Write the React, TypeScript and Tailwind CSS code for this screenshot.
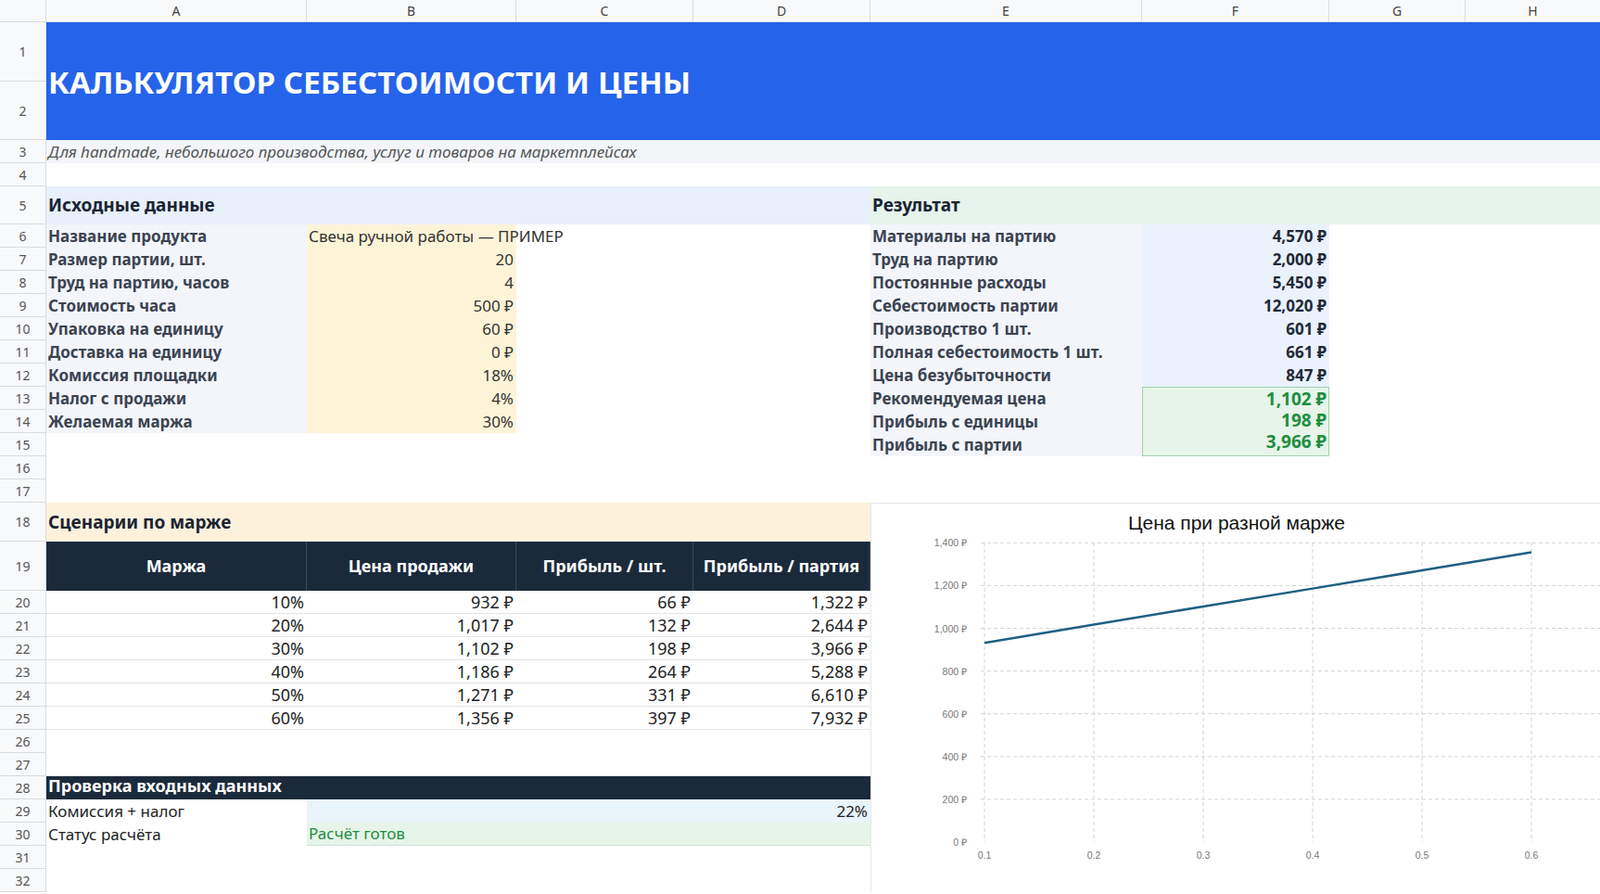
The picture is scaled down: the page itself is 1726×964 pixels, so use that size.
import React from "react";

const inputs: [string, string][] = [
  ["Размер партии, шт.", "20"],
  ["Труд на партию, часов", "4"],
  ["Стоимость часа", "500 ₽"],
  ["Упаковка на единицу", "60 ₽"],
  ["Доставка на единицу", "0 ₽"],
  ["Комиссия площадки", "18%"],
  ["Налог с продажи", "4%"],
  ["Желаемая маржа", "30%"],
];

const results: [string, string][] = [
  ["Материалы на партию", "4,570 ₽"],
  ["Труд на партию", "2,000 ₽"],
  ["Постоянные расходы", "5,450 ₽"],
  ["Себестоимость партии", "12,020 ₽"],
  ["Производство 1 шт.", "601 ₽"],
  ["Полная себестоимость 1 шт.", "661 ₽"],
  ["Цена безубыточности", "847 ₽"],
];

const greens: [string, string][] = [
  ["Рекомендуемая цена", "1,102 ₽"],
  ["Прибыль с единицы", "198 ₽"],
  ["Прибыль с партии", "3,966 ₽"],
];

const scenarios = [
  ["10%", "932 ₽", "66 ₽", "1,322 ₽"],
  ["20%", "1,017 ₽", "132 ₽", "2,644 ₽"],
  ["30%", "1,102 ₽", "198 ₽", "3,966 ₽"],
  ["40%", "1,186 ₽", "264 ₽", "5,288 ₽"],
  ["50%", "1,271 ₽", "331 ₽", "6,610 ₽"],
  ["60%", "1,356 ₽", "397 ₽", "7,932 ₽"],
];

const rowHeights = [64, 63, 25, 25, 41, ...Array(12).fill(25), 42, 53, ...Array(13).fill(25)];

const Chart = () => {
  const prices = [932, 1017, 1102, 1186, 1271, 1356];
  const x = (i: number) => 122 + i * 118;
  const y = (v: number) => 365 - (v / 200) * 46.1;
  return (
    <svg width="788" height="394" className="block">
      <text x="394" y="28" textAnchor="middle" fontSize="21" fill="#111" fontFamily="Liberation Sans Narrow, Liberation Sans, sans-serif">
        Цена при разной марже
      </text>
      {[0, 200, 400, 600, 800, 1000, 1200, 1400].map((v) => (
        <g key={v}>
          {v > 0 && <line x1="118" x2="788" y1={y(v)} y2={y(v)} stroke="#d4d4d4" strokeDasharray="4 3" />}
          <text x="103" y={y(v) + 4} textAnchor="end" fontSize="10.5" fill="#777" fontFamily="Liberation Sans Narrow, Liberation Sans, sans-serif">
            {v === 0 ? "0" : v.toLocaleString("en-US")} ₽
          </text>
        </g>
      ))}
      {[0.1, 0.2, 0.3, 0.4, 0.5, 0.6].map((t, i) => (
        <g key={t}>
          <line x1={x(i)} x2={x(i)} y1="42" y2="365" stroke="#d4d4d4" strokeDasharray="4 3" />
          <text x={x(i)} y="383" textAnchor="middle" fontSize="10.5" fill="#777" fontFamily="Liberation Sans, sans-serif">
            {t}
          </text>
        </g>
      ))}
      <polyline points={prices.map((p, i) => `${x(i)},${y(p)}`).join(" ")} fill="none" stroke="#1f5f82" strokeWidth="2.5" />
    </svg>
  );
};

export default function App() {
  return (
    <div className="w-[1726px] h-[964px] overflow-hidden bg-white text-[17px] text-[#1f2937] font-['Liberation_Sans',sans-serif]">
      <div className="grid grid-cols-[50px_281px_226px_191px_191px_293px_202px_147px_146px] grid-rows-[24px_64px_63px_25px_25px_41px_repeat(12,25px)_42px_53px_repeat(13,25px)]">
        {/* column headers */}
        <div className="row-start-1 col-start-1 bg-[#f8f9fa] border-b border-r border-[#dadce0]" />
        {["A", "B", "C", "D", "E", "F", "G", "H"].map((c) => (
          <div key={c} className="row-start-1 bg-[#f8f9fa] border-b border-r border-[#dadce0] flex items-center justify-center text-[14px] text-[#444]">
            {c}
          </div>
        ))}
        {/* row numbers */}
        <div className="col-start-1 row-start-2 row-span-31 flex flex-col">
          {rowHeights.map((h, i) => (
            <div key={i} style={{ height: h }} className="shrink-0 bg-[#f8f9fa] border-b border-r border-[#dadce0] flex items-center justify-center text-[14px] text-[#555]">
              {i + 1}
            </div>
          ))}
        </div>

        {/* title */}
        <div className="row-start-2 row-span-2 col-start-2 col-span-8 bg-[#2563eb] flex items-center pl-[2px] pt-[2px]">
          <h1 className="text-[33px] font-bold text-white tracking-[0.1px]">КАЛЬКУЛЯТОР СЕБЕСТОИМОСТИ И ЦЕНЫ</h1>
        </div>
        <div className="row-start-4 col-start-2 col-span-8 bg-[#f3f5f9] flex items-center pl-[2px] italic text-[#555]">
          Для handmade, небольшого производства, услуг и товаров на маркетплейсах
        </div>

        {/* section headers */}
        <div className="row-start-6 col-start-2 col-span-4 bg-[#e8f0fc] flex items-center pl-[2px] font-bold text-[19px] text-[#1a2433]">
          Исходные данные
        </div>
        <div className="row-start-6 col-start-6 col-span-4 bg-[#e7f4ec] flex items-center pl-[2px] font-bold text-[19px] text-[#1a2433]">
          Результат
        </div>

        {/* inputs */}
        <div className="row-start-7 col-start-2 col-span-2 flex">
          <div className="w-[281px] bg-[#f3f5fa] flex items-center pl-[2px] font-bold text-[#3b4351]">Название продукта</div>
          <div className="w-[226px] bg-[#fdf4d8] flex items-center pl-[2px] whitespace-nowrap overflow-visible z-10 text-[#333]">
            Свеча ручной работы — ПРИМЕР
          </div>
        </div>
        <div className="row-start-8 row-span-8 col-start-2 col-span-2 flex flex-col">
          {inputs.map(([l, v]) => (
            <div key={l} className="h-[25px] flex">
              <div className="w-[281px] bg-[#f3f5fa] flex items-center pl-[2px] font-bold text-[#3b4351]">{l}</div>
              <div className="w-[226px] bg-[#fdf4d8] flex items-center justify-end pr-[3px] text-[#333]">{v}</div>
            </div>
          ))}
        </div>

        {/* results */}
        <div className="row-start-7 row-span-10 col-start-6 col-span-2 flex flex-col">
          {results.map(([l, v]) => (
            <div key={l} className="h-[25px] flex">
              <div className="w-[293px] bg-[#f3f5fa] flex items-center pl-[2px] font-bold text-[#3b4351]">{l}</div>
              <div className="w-[202px] bg-[#eaf2fd] flex items-center justify-end pr-[3px] font-bold text-[#1f2937]">{v}</div>
            </div>
          ))}
          <div className="flex">
            <div className="w-[293px] bg-[#f3f5fa] flex flex-col">
              {greens.map(([l]) => (
                <div key={l} className="h-[25px] flex items-center pl-[2px] font-bold text-[#3b4351]">{l}</div>
              ))}
            </div>
            <div className="w-[202px] bg-[#e6f4ea] border border-[#9fd3ab] flex flex-col">
              {greens.map(([l, v]) => (
                <div key={l} className="h-[25px] -my-px first:mt-0 flex items-center justify-end pr-[2px] font-bold text-[19px] text-[#1e8e3e]">{v}</div>
              ))}
            </div>
          </div>
        </div>

        {/* scenarios */}
        <div className="row-start-19 col-start-2 col-span-4 bg-[#fdf1dc] flex items-center pl-[2px] font-bold text-[19px] text-[#1a2433] font-['Liberation_Sans_Narrow','Liberation_Sans',sans-serif]">
          Сценарии по марже
        </div>
        {["Маржа", "Цена продажи", "Прибыль / шт.", "Прибыль / партия"].map((h) => (
          <div key={h} className="row-start-20 bg-[#1b2a3b] border-r border-[#3c4b5c] last:border-r-0 flex items-center justify-center text-white font-bold text-[18px] font-['Liberation_Sans_Narrow','Liberation_Sans',sans-serif]">
            {h}
          </div>
        ))}
        <div className="row-start-21 row-span-6 col-start-2 col-span-4 flex flex-col font-['Liberation_Sans_Narrow','Liberation_Sans',sans-serif] text-[18px] text-[#222]">
          {scenarios.map((r) => (
            <div key={r[0]} className="h-[25px] flex border-b border-[#e2e4e8]">
              <div className="w-[281px] flex items-center justify-end pr-[3px]">{r[0]}</div>
              <div className="w-[226px] flex items-center justify-end pr-[3px]">{r[1]}</div>
              <div className="w-[191px] flex items-center justify-end pr-[3px]">{r[2]}</div>
              <div className="w-[191px] flex items-center justify-end pr-[3px]">{r[3]}</div>
            </div>
          ))}
        </div>

        {/* checks */}
        <div className="row-start-29 col-start-2 col-span-4 bg-[#1b2a3b] flex items-end pl-[2px] pb-[1px] text-white font-bold text-[18px] font-['Liberation_Sans_Narrow','Liberation_Sans',sans-serif]">
          Проверка входных данных
        </div>
        <div className="row-start-30 col-start-2 flex items-center pl-[2px] text-[#222]">Комиссия + налог</div>
        <div className="row-start-30 col-start-3 col-span-3 bg-[#eaf4fb] flex items-center justify-end pr-[3px] text-[#222]">22%</div>
        <div className="row-start-31 col-start-2 flex items-center pl-[2px] text-[#222]">Статус расчёта</div>
        <div className="row-start-31 col-start-3 col-span-3 bg-[#e7f4ea] border-b border-[#cfe3d4] flex items-center pl-[2px] text-[#1e8e3e]">Расчёт готов</div>

        {/* chart */}
        <div className="row-start-19 row-span-15 col-start-6 col-span-4 border-l border-t border-[#e5e7eb] bg-white">
          <Chart />
        </div>
      </div>
    </div>
  );
}
